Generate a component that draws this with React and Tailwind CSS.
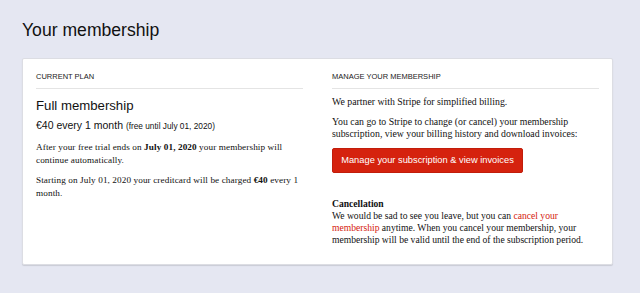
import React from 'react';

const sans = { fontFamily: '"Liberation Sans", Arial, sans-serif' };
const serif = { fontFamily: '"Liberation Serif", "Times New Roman", serif' };

const SectionLabel = ({ children }) => (
  <div className="pb-[6px] border-b border-[#e4e4e4] text-[7.5px] leading-[10px] uppercase text-[#222]" style={sans}>
    {children}
  </div>
);

export default function App() {
  return (
    <div className="min-h-[293px] w-[640px] bg-[#e5e7f2] px-[22px] pt-[19px] pb-[28px]" style={sans}>
      <h1 className="text-[17.6px] leading-[22px] text-[#111] mb-[17px]">Your membership</h1>

      <div className="w-[591px] h-[207px] bg-white border border-[#dcdde3] rounded-[2px] shadow-[0_1px_1px_rgba(0,0,0,0.12)] flex px-[13px] pt-[13px]">
        {/* Current plan */}
        <div className="w-[268px]">
          <SectionLabel>Current plan</SectionLabel>
          <div className="text-[13.2px] leading-[18px] text-[#111] mt-[8px]">Full membership</div>
          <div className="text-[10.5px] leading-[14px] text-[#111] mt-[3px]">
            €40 every 1 month <span className="text-[8.3px]">(free until July 01, 2020)</span>
          </div>
          <div className="text-[9.2px] leading-[13px] tracking-[0.1px] text-[#111] mt-[8px]" style={serif}>
            <p>After your free trial ends on <b>July 01, 2020</b> your membership will continue automatically.</p>
            <p className="mt-[7px]">Starting on July 01, 2020 your creditcard will be charged <b>€40</b> every 1 month.</p>
          </div>
        </div>

        {/* Manage membership */}
        <div className="w-[268px] ml-[29px]">
          <SectionLabel>Manage your membership</SectionLabel>
          <div className="text-[9.8px] leading-[12px] text-[#111] mt-[7px]" style={serif}>
            <p>We partner with Stripe for simplified billing.</p>
            <p className="mt-[8px]">You can go to Stripe to change (or cancel) your membership subscription, view your billing history and download invoices:</p>
          </div>
          <button
            className="mt-[8px] h-[25px] w-[191px] whitespace-nowrap bg-[#d5220e] border border-[#c11d0b] rounded-[2px] text-white text-[9.3px]"
            style={sans}
          >
            Manage your subscription &amp; view invoices
          </button>
          <div className="text-[9.6px] leading-[12px] text-[#111] mt-[25px]" style={serif}>
            <div className="font-bold">Cancellation</div>
            <p>
              We would be sad to see you leave, but you can <span className="text-[#d5220e]">cancel your membership</span> anytime. When you cancel your membership, your membership will be valid until the end of the subscription period.
            </p>
          </div>
        </div>
      </div>
    </div>
  );
}
